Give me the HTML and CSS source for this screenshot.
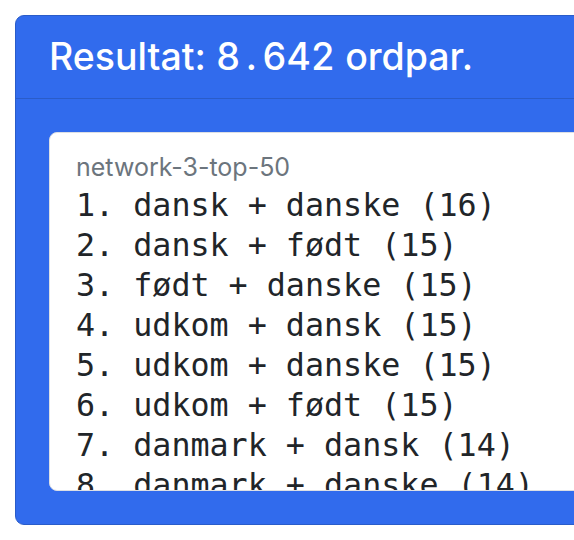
FILE: index.html
```html
<!DOCTYPE html>
<html lang="da">
<head>
<meta charset="utf-8">
<title>Resultat</title>
<link rel="stylesheet" href="styles.css">
</head>
<body>
<div class="card">
  <div class="card-header">
    <h1 class="title">Resultat: <span class="num">8<span class="sep">.</span>642</span> ordpar.</h1>
  </div>
  <div class="card-body">
    <div class="result-box">
      <div class="label">network-3-top-50</div>
      <ol class="pairs">
        <li>1. dansk + danske (16)</li>
        <li>2. dansk + født (15)</li>
        <li>3. født + danske (15)</li>
        <li>4. udkom + dansk (15)</li>
        <li>5. udkom + danske (15)</li>
        <li>6. udkom + født (15)</li>
        <li>7. danmark + dansk (14)</li>
        <li>8. danmark + danske (14)</li>
        <li>9. danmark + født (14)</li>
      </ol>
    </div>
  </div>
</div>
</body>
</html>
```

FILE: styles.css
```css
html, body {
  margin: 0;
  padding: 0;
  overflow: hidden;
  background: #ffffff;
}
body {
  padding: 15px 0 0 15px;
  font-family: Inter, "Liberation Sans", Arial, sans-serif;
}
.card {
  width: 700px;
  height: 510px;
  box-sizing: border-box;
  background: #316bed;
  border: 1px solid #2a5cc9;
  border-radius: 9px;
  display: flex;
  flex-direction: column;
  overflow: hidden;
}
.card-header {
  padding: 18px 33px 18px 33px;
  border-bottom: 1px solid #2a5cc9;
}
.title {
  margin: 0;
  color: #ffffff;
  font-weight: 500;
  font-size: 37.5px;
  line-height: 46px;
}
.num {
  font-variant-numeric: tabular-nums;
}
.sep {
  display: inline-block;
  width: 22px;
  text-align: center;
}
.card-body {
  flex: 1;
  padding: 33px 0 33px 33px;
  display: flex;
  min-height: 0;
}
.result-box {
  flex: 1;
  background: #ffffff;
  border: 1px solid #dcdfe4;
  border-radius: 8px;
  padding: 19px 26px 0 26px;
  overflow: hidden;
}
.label {
  color: #6c757d;
  font-size: 25px;
  line-height: 30px;
  margin-bottom: 3px;
}
.pairs {
  list-style: none;
  margin: 0;
  padding: 0;
  font-family: "DejaVu Sans Mono", "Liberation Mono", monospace;
  font-size: 31.7px;
  line-height: 40px;
  color: #212529;
}
.pairs li {
  white-space: pre;
}
```
